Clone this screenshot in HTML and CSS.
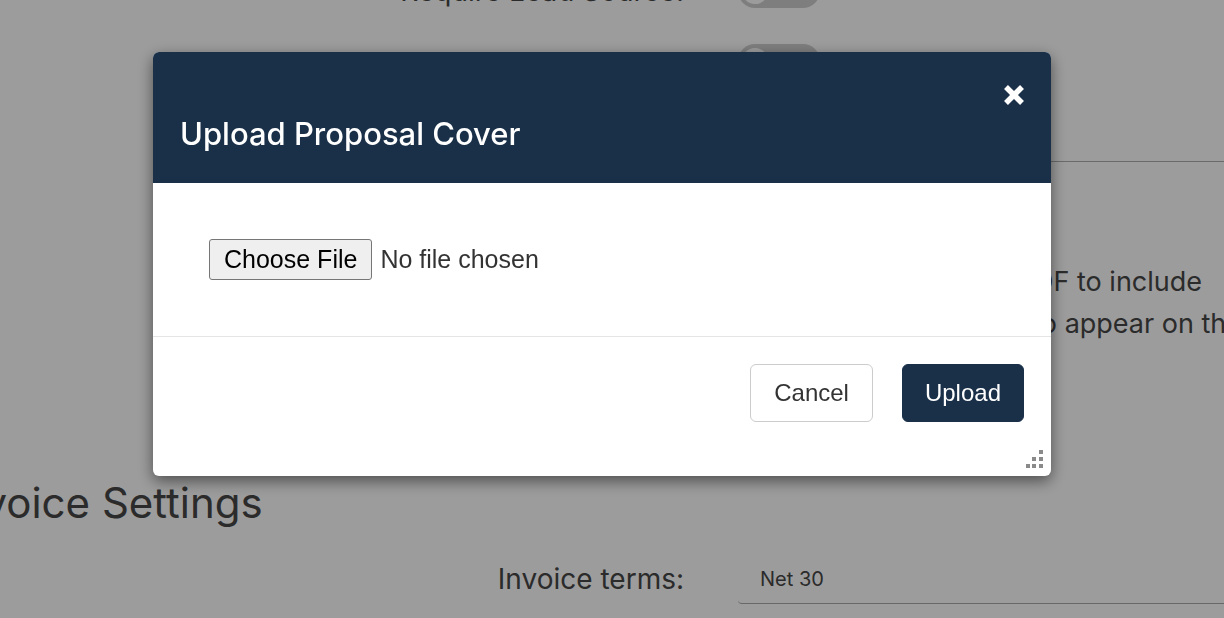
FILE: index.html
```html
<!DOCTYPE html>
<html lang="en">
<head>
<meta charset="utf-8">
<title>Upload Proposal Cover</title>
<link rel="stylesheet" href="styles.css">
</head>
<body>
<div class="page">
  <div class="row toggle-row">
    <div class="label">Require Lead Source:</div>
    <div class="control"><span class="toggle"></span></div>
  </div>
  <div class="row toggle-row">
    <div class="label"></div>
    <div class="control"><span class="toggle"></span></div>
  </div>
  <div class="row rule-row">
    <div></div>
    <hr class="rule">
  </div>
  <div class="row desc-row">
    <div class="label"></div>
    <p class="desc"><span class="line">Upload a cover page PDF to include</span><span class="line">with proposals, set up to appear on the first page.</span></p>
  </div>
  <h2 class="section">Invoice Settings</h2>
  <div class="row field-row">
    <div class="label">Invoice terms:</div>
    <div class="control"><div class="select">Net 30</div></div>
  </div>
</div>

<div class="overlay">
  <div class="modal">
    <div class="modal-header">
      <button class="close" type="button" aria-label="Close">
        <svg width="22" height="22" viewBox="0 0 22 22"><path d="M3 3L19 19M19 3L3 19" stroke="#fff" stroke-width="5.5" fill="none"/></svg>
      </button>
      <h4 class="modal-title">Upload Proposal Cover</h4>
    </div>
    <div class="modal-body">
      <div class="file-input"><span class="file-btn">Choose File</span><span class="file-name">No file chosen</span></div>
    </div>
    <div class="modal-footer">
      <button class="btn btn-default" type="button">Cancel</button>
      <button class="btn btn-primary" type="button">Upload</button>
    </div>
    <span class="grip">
      <svg width="17" height="18" viewBox="0 0 17 18" fill="#8a8a8a">
        <rect x="13" y="0" width="4" height="4"/>
        <rect x="6" y="7" width="4" height="4"/><rect x="13" y="7" width="4" height="4"/>
        <rect x="0" y="14" width="4" height="4"/><rect x="6" y="14" width="4" height="4"/><rect x="13" y="14" width="4" height="4"/>
      </svg>
    </span>
  </div>
</div>
</body>
</html>
```

FILE: styles.css
```css
* { box-sizing: border-box; }
html, body { margin: 0; padding: 0; }
body {
  background: #fff;
  font-family: Inter, "Noto Sans", sans-serif;
  color: #474747;
  overflow: hidden;
  width: 1224px;
  height: 618px;
}
.page {
  margin-top: -26px;
  margin-left: -48px;
  width: 1400px;
}
.row {
  display: grid;
  grid-template-columns: 732px 1fr;
  column-gap: 54px;
  align-items: center;
}
.label {
  text-align: right;
  font-size: 28px;
}
.toggle-row { height: 34px; margin-bottom: 36px; }
.toggle {
  display: block;
  position: relative;
  width: 82px;
  height: 34px;
  border-radius: 17px;
  background: #cfcfcf;
}
.toggle::before {
  content: "";
  position: absolute;
  left: 4px;
  top: 4px;
  width: 26px;
  height: 26px;
  border-radius: 50%;
  background: #fff;
}
.rule-row { margin-top: 83px; }
.rule {
  margin: 0;
  border: 0;
  border-top: 1px solid #b0b0b0;
}
.desc-row { align-items: start; margin-top: 99px; }
.desc {
  margin: 0;
  padding-left: 6px;
  font-size: 27px;
  line-height: 42px;
  white-space: nowrap;
}
.line { display: block; }
.section {
  margin: 133px 0 0 -4px;
  font-size: 42px;
  font-weight: 400;
  line-height: 50px;
}
.field-row { margin-top: 25px; }
.select {
  height: 51px;
  display: flex;
  align-items: center;
  padding-left: 22px;
  padding-top: 2px;
  font-size: 20px;
  border-bottom: 1px solid #aaa;
  border-bottom-left-radius: 4px;
}

/* overlay + modal */
.overlay {
  position: fixed;
  inset: 0;
  background: rgba(0, 0, 0, 0.39);
  padding: 52px 0 0 153px;
}
.modal {
  position: relative;
  width: 898px;
  background: #fff;
  border-radius: 6px;
  box-shadow: 0 5px 15px rgba(0, 0, 0, 0.5);
}
.modal-header {
  background: #1a3049;
  border-radius: 6px 6px 0 0;
  padding: 32px 26px 31px 27px;
  display: flex;
  flex-direction: column;
}
.close {
  align-self: flex-end;
  width: 22px;
  height: 22px;
  margin: 0 0 10px 0;
  padding: 0;
  border: 0;
  background: transparent;
  display: block;
}
.close svg { display: block; }
.modal-title {
  margin: 0;
  color: #fff;
  font-family: Inter, sans-serif;
  font-size: 31px;
  font-weight: 500;
  line-height: 36px;
}
.modal-body {
  padding: 56px;
  border-bottom: 1px solid #e5e5e5;
}
.file-input {
  display: flex;
  align-items: center;
  gap: 8px;
  font-family: "Liberation Sans", Arial, sans-serif;
  font-size: 25px;
}
.file-btn {
  height: 41px;
  display: flex;
  align-items: center;
  padding: 0 14px;
  border: 1px solid #767676;
  border-radius: 3px;
  background: #efefef;
  color: #000;
}
.file-name { color: #333; }
.modal-footer {
  display: flex;
  justify-content: flex-end;
  gap: 29px;
  padding: 27px 27px 54px;
}
.btn {
  height: 58px;
  padding: 0 23px;
  border-radius: 6px;
  font-family: "Liberation Sans", Arial, sans-serif;
  font-size: 24px;
  cursor: pointer;
}
.btn-default {
  background: #fff;
  border: 1px solid #ccc;
  color: #333;
}
.btn-primary {
  padding: 0 22px;
  background: #1a3049;
  border: 1px solid #1a3049;
  color: #fff;
}
.grip {
  position: absolute;
  right: 8px;
  bottom: 8px;
  display: block;
  line-height: 0;
}
```
